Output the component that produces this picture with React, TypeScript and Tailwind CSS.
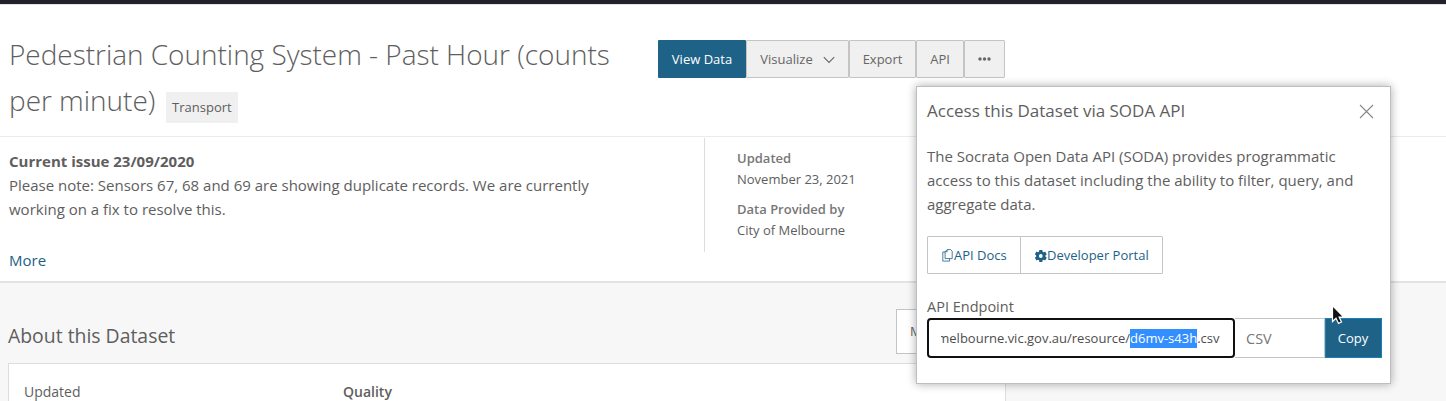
import React from "react";

const actionClass =
  "flex h-[38px] items-center justify-center rounded-[1px] border border-[#c4c4c4] bg-[#f0f0f0] pt-px text-[13px] text-[#666]";

function Actions() {
  return (
    <div className="flex h-[38px]">
      <button className="h-[38px] w-[88px] rounded-[1px] bg-[#1e6287] pt-px text-[13px] text-white">View Data</button>
      <button className={`${actionClass} w-[103px] gap-[10px]`}>
        Visualize
        <svg width="12" height="8" viewBox="0 0 12 8" fill="none" stroke="#666" strokeWidth="1.1">
          <path d="M.8 1.2 6 6.4 11.2 1.2" />
        </svg>
      </button>
      <button className={`${actionClass} w-[67px]`}>Export</button>
      <button className={`${actionClass} w-[48px]`}>API</button>
      <button className={`${actionClass} w-[41px]`} aria-label="More actions">
        <svg className="mb-px" width="13" height="4" viewBox="0 0 13 4" fill="#666">
          <circle cx="2" cy="2" r="1.7" />
          <circle cx="6.5" cy="2" r="1.7" />
          <circle cx="11" cy="2" r="1.7" />
        </svg>
      </button>
    </div>
  );
}

function ApiPopup() {
  return (
    <section className="absolute left-[916px] top-[86px] flex h-[298px] w-[475px] flex-col border border-[#bebebe] bg-white pl-[10px] pr-2 text-[#5e5e5e] shadow-[0_0_9px_rgba(0,0,0,0.33)]">
      <header className="flex h-[49px] items-center justify-between pr-[8px]">
        <h2 className="pb-[2px] text-[17px] leading-[24px]">Access this Dataset via SODA API</h2>
        <svg width="15" height="15" viewBox="0 0 15 15" stroke="#888" strokeWidth="1.1">
          <path d="m1 1 13 13M14 1 1 14" />
        </svg>
      </header>
      <p className="mt-[8px] whitespace-nowrap text-[15px] leading-6">
        The Socrata Open Data API (SODA) provides programmatic
        <br />
        access to this dataset including the ability to filter, query, and
        <br />
        aggregate data.
      </p>
      <div className="mt-[20px] flex h-[38px] text-[13px] text-[#1e6287]">
        <a className="flex w-[94px] items-center rounded-l-[1px] border border-[#c4c4c4] pl-[14px] pt-px">
          <svg className="mr-px" width="11" height="13" viewBox="0 0 11 13" fill="none" stroke="#1e6287" strokeWidth=".8">
            <path d="M5.2.6h3.4l1.6 1.6v7.4H3.1V2.7z M5.2.6v2.1H3.1 M3.1 3H.8v9.1h6.8V9.6" />
          </svg>
          API Docs
        </a>
        <a className="-ml-px flex w-[143px] items-center rounded-r-[1px] border border-[#c4c4c4] pl-[14px] pt-px">
          <svg width="12" height="12" viewBox="0 0 12 12">
            <g fill="#1e6287">
              <circle cx="5.8" cy="6" r="4.7" />
              <rect x="4.2" width="3.2" height="12" />
              <rect x="4.2" width="3.2" height="12" transform="rotate(60 5.8 6)" />
              <rect x="4.2" width="3.2" height="12" transform="rotate(120 5.8 6)" />
            </g>
            <circle cx="5.8" cy="6" r="1.9" fill="#fff" />
          </svg>
          <span>Developer Portal</span>
        </a>
      </div>
      <label className="mt-[21px] h-[23px] text-[14.5px] leading-6">API Endpoint</label>
      <div className="flex h-10">
        <div className="flex w-[308px] items-center rounded-[4px] border-2 border-[#101010] pl-3 pr-[13.5px] pt-px text-[13px] text-[#4d4d4d]">
          <div className="flex w-full justify-end overflow-hidden whitespace-nowrap">
            <span>melbourne.vic.gov.au/resource/</span>
            <span className="bg-[#338fff] text-white">d6mv-s43h</span>
            <span>.csv</span>
          </div>
        </div>
        <div className="flex w-[90px] items-center border border-l-0 border-[#c4c4c4] pl-[11px] pt-[2px] text-[14.5px] text-[#777]">CSV</div>
        <button className="w-[57px] border border-[#1a80b5] bg-[#1e6287] pr-px pt-px text-[13px] text-white">Copy</button>
      </div>
    </section>
  );
}

export default function App() {
  return (
    <div className="relative h-[401px] w-[1446px] overflow-hidden bg-white font-['Open_Sans',sans-serif] text-[#5e5e5e]">
      <div className="h-[5px] border-b border-[#e3e3e3] bg-[#22212b]" />
      <header className="flex h-[132px] items-start border-b border-[#ebebeb] pl-[9px] pt-[26px]">
        <h1 className="w-[649px] whitespace-nowrap text-[27.95px] font-light leading-[46px]">
          Pedestrian Counting System - Past Hour (counts
          <br />
          <span className="flex">
            per minute)
            <span className="ml-[10.5px] mt-[15px] flex h-[31px] w-[72px] items-center justify-center bg-[#f0f0f0] pb-[2px] text-[13px] font-normal leading-5">
              Transport
            </span>
          </span>
        </h1>
        <div className="pt-[9px]">
          <Actions />
        </div>
      </header>
      <section className="flex h-[146px] border-b-2 border-[#e3e3e3] pl-[9px]">
        <div className="w-[695px] pt-[12px] text-[15px] leading-6">
          <h3 className="font-bold">Current issue 23/09/2020</h3>
          <p>
            Please note: Sensors 67, 68 and 69 are showing duplicate records. We are currently
            <br />
            working on a fix to resolve this.
          </p>
          <a className="mt-[27px] block text-[#1e6287]">More</a>
        </div>
        <dl className="mt-px h-[114px] border-l border-[#ddd] pl-8 pt-[10px] text-[13px] leading-[21px]">
          <dt className="font-semibold text-[#777]">Updated</dt>
          <dd>November 23, 2021</dd>
          <dt className="mt-[9px] font-semibold text-[#777]">Data Provided by</dt>
          <dd>City of Melbourne</dd>
        </dl>
      </section>
      <main className="h-[118px] bg-[#f7f7f7] pl-2 pt-[26px]">
        <div className="flex h-[54px] w-[998px] items-start justify-between">
          <h2 className="pt-[13px] text-[19.4px] leading-[28px]">About this Dataset</h2>
          <button className="h-[45px] w-[110px] border border-[#c4c4c4] bg-white pl-[13px] text-left text-[13px] text-[#666]">More</button>
        </div>
        <div className="flex h-[60px] w-[998px] border border-[#ddd] bg-white pl-[15px] pt-[17px] text-[14px] leading-[22px]">
          <span className="w-[319px]">Updated</span>
          <span className="font-semibold">Quality</span>
        </div>
      </main>
      <ApiPopup />
      <svg className="absolute left-[1331px] top-[304px]" width="15" height="21" viewBox="0 0 15 21">
        <path d="M1.5 1.5v16l3.5-3.3 2.5 5.2 3-1.4-2.4-5h4.6z" fill="#111" stroke="#fff" strokeWidth="1.2" />
      </svg>
    </div>
  );
}
